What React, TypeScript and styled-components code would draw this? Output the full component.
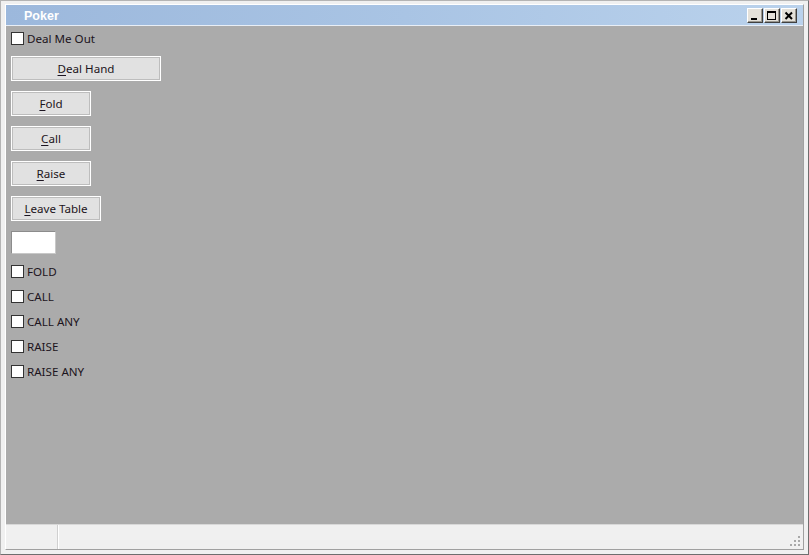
import React from "react";
import styled, { createGlobalStyle } from "styled-components";

const Global = createGlobalStyle`
  html, body { margin: 0; padding: 0; background: #f0f0f0; }
  body { width: 809px; height: 555px; overflow: hidden; font-family: "Noto Sans", "Open Sans", sans-serif; }
`;

const Frame = styled.div`
  box-sizing: border-box;
  width: 809px;
  height: 555px;
  background: #f0f0f0;
  border-left: 1px solid #b4b4b4;
  border-top: 1px solid #b4b4b4;
  border-right: 1px solid #6e6e6e;
  border-bottom: 1px solid #6e6e6e;
  padding: 3px 4px 4px 4px;
  display: flex;
  flex-direction: column;
`;

const Inner = styled.div`
  flex: 1;
  display: flex;
  flex-direction: column;
  border-left: 1px solid #ffffff;
  border-top: 1px solid #ffffff;
  border-right: 1px solid #a0a0a0;
  border-bottom: 1px solid #a0a0a0;
  min-height: 0;
`;

const TitleBar = styled.div`
  height: 20px;
  display: flex;
  align-items: center;
  background: linear-gradient(to right, #9cb8dc 0%, #a9c4e4 50%, #bad2ec 100%);
  border-bottom: 1px solid #e8eef6;
  padding: 0 6px 0 18px;
`;

const Title = styled.div`
  flex: 1;
  color: #ffffff;
  font-family: "Liberation Sans", Arial, sans-serif;
  font-weight: bold;
  font-size: 12.5px;
  padding-top: 2px;
`;

const CaptionGroup = styled.div`
  display: flex;
  gap: 1px;
  margin-top: 1px;
`;

const CaptionButton = styled.div`
  box-sizing: border-box;
  width: 16px;
  height: 15px;
  background: #e4e1da;
  border-top: 1px solid #ffffff;
  border-left: 1px solid #ffffff;
  border-right: 1px solid #404040;
  border-bottom: 1px solid #404040;
  box-shadow: inset -1px -1px 0 #9a978f;
  display: flex;
  align-items: center;
  justify-content: center;
`;

const Content = styled.div`
  flex: 1;
  background: #ababab;
  display: flex;
  flex-direction: column;
  align-items: flex-start;
  padding: 0 5px;
  min-height: 0;
`;

const CheckRow = styled.label`
  height: 25px;
  display: flex;
  align-items: center;
  gap: 3px;
  font-size: 11.6px;
  color: #1c1420;
`;

const Box = styled.span`
  box-sizing: border-box;
  width: 13px;
  height: 13px;
  background: #ffffff;
  border: 1px solid #333333;
  display: inline-block;
`;

const Button = styled.div<{ $w: number; $mt: number }>`
  box-sizing: border-box;
  width: ${(p) => p.$w}px;
  height: 25px;
  margin-top: ${(p) => p.$mt}px;
  background: #e1e1e1;
  border: 1px solid #ffffff;
  box-shadow: inset 0 0 0 1px #bdbdbd;
  display: flex;
  align-items: center;
  justify-content: center;
  font-size: 11.6px;
  color: #1c1420;
  padding-bottom: 1px;
`;

const Key = styled.span`
  text-decoration: underline;
  text-underline-offset: 2px;
`;

const TextBox = styled.div`
  box-sizing: border-box;
  width: 45px;
  height: 23px;
  margin: 10px 0 5px;
  background: #ffffff;
  border: 1px solid #8c8c8c;
  border-right-color: #c8c8c8;
  border-bottom-color: #c8c8c8;
`;

const StatusBar = styled.div`
  height: 24px;
  display: flex;
  background: #f0f0f0;
  border-top: 1px solid #d8d8d8;
  position: relative;
`;

const StatusPane = styled.div`
  width: 51px;
  border-right: 1px solid #d0d0d0;
  box-shadow: 1px 0 0 #ffffff;
`;

const Grip = styled.svg`
  position: absolute;
  right: 2px;
  bottom: 2px;
`;

const Spacer = styled.div`
  height: 5px;
`;

const App: React.FC = () => {
  const actions = ["FOLD", "CALL", "CALL ANY", "RAISE", "RAISE ANY"];
  return (
    <>
      <Global />
      <Frame>
        <Inner>
          <TitleBar>
            <Title>Poker</Title>
            <CaptionGroup>
              <CaptionButton>
                <svg width="10" height="10" viewBox="0 0 10 10">
                  <rect x="1" y="7" width="6" height="2" fill="#000" />
                </svg>
              </CaptionButton>
              <CaptionButton>
                <svg width="10" height="10" viewBox="0 0 10 10">
                  <rect x="0.5" y="0.5" width="8" height="8" fill="none" stroke="#000" />
                  <rect x="0" y="0" width="9" height="2" fill="#000" />
                </svg>
              </CaptionButton>
              <CaptionButton>
                <svg width="10" height="10" viewBox="0 0 10 10">
                  <path d="M1.5 1.5 L8 8 M8 1.5 L1.5 8" stroke="#000" strokeWidth="2" />
                </svg>
              </CaptionButton>
            </CaptionGroup>
          </TitleBar>
          <Content>
            <CheckRow>
              <Box />
              Deal Me Out
            </CheckRow>
            <Button $w={150} $mt={5}>
              <span><Key>D</Key>eal Hand</span>
            </Button>
            <Button $w={80} $mt={10}>
              <span><Key>F</Key>old</span>
            </Button>
            <Button $w={80} $mt={10}>
              <span><Key>C</Key>all</span>
            </Button>
            <Button $w={80} $mt={10}>
              <span><Key>R</Key>aise</span>
            </Button>
            <Button $w={90} $mt={10}>
              <span><Key>L</Key>eave Table</span>
            </Button>
            <TextBox />
            {actions.map((a) => (
              <CheckRow key={a}>
                <Box />
                {a}
              </CheckRow>
            ))}
            <Spacer />
          </Content>
          <StatusBar>
            <StatusPane />
            <Grip width="12" height="12" viewBox="0 0 12 12">
              {[
                [9, 1], [9, 5], [5, 5], [9, 9], [5, 9], [1, 9],
              ].map(([x, y]) => (
                <rect key={`${x}-${y}`} x={x} y={y} width="2" height="2" fill="#a8a8a8" />
              ))}
            </Grip>
          </StatusBar>
        </Inner>
      </Frame>
    </>
  );
};

export default App;
